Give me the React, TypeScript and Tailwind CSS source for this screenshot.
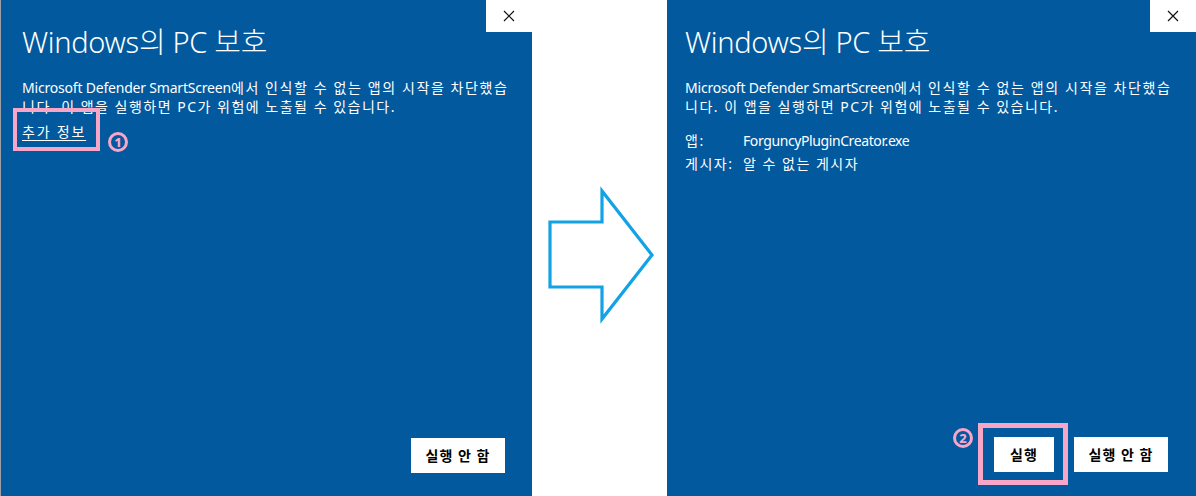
import React from "react";

const FONT = { fontFamily: '"Segoe UI", "Noto Sans", "Noto Sans CJK KR", sans-serif' };

function CloseBox() {
  return (
    <div className="absolute top-0 right-0 w-[46px] h-[32px] bg-white flex items-center justify-center">
      <svg width="12" height="12" viewBox="0 0 12 12">
        <path d="M1 1 L11 11 M11 1 L1 11" stroke="#111" strokeWidth="1.2" />
      </svg>
    </div>
  );
}

function Badge({ n }: { n: string }) {
  return (
    <div className="w-[20px] h-[20px] rounded-full border-[3px] border-[#f7a6c8] flex items-center justify-center text-[#f7a6c8] text-[13px] font-extrabold leading-none">
      {n}
    </div>
  );
}

function Btn({ label, w }: { label: string; w: string }) {
  return (
    <div className={`${w} h-[35px] bg-white flex items-center justify-center text-black text-[14px] font-bold tracking-[1px]`}>
      {label}
    </div>
  );
}

function Title() {
  return (
    <div className="text-white text-[29px] font-light leading-none tracking-[-0.3px]">Windows의 PC 보호</div>
  );
}

function Message() {
  return (
    <div className="text-white text-[14px] leading-[19px] whitespace-nowrap">
      <div>
        <span className="tracking-[-0.2px]">Microsoft Defender SmartScreen</span>
        <span className="tracking-[1.6px]">에서 인식할 수 없는 앱의 시작을 차단했습</span>
      </div>
      <div className="tracking-[1.5px]">니다. 이 앱을 실행하면 PC가 위험에 노출될 수 있습니다.</div>
    </div>
  );
}

function Arrow() {
  return (
    <svg width="135" height="496" viewBox="532 0 135 496">
      <polygon
        points="550,222 602,222 602,191 652,255 602,319 602,287 550,287"
        fill="none"
        stroke="#12a3e6"
        strokeWidth="3.2"
        strokeLinejoin="miter"
      />
    </svg>
  );
}

export default function App() {
  return (
    <div className="w-[1196px] h-[496px] bg-white flex" style={FONT}>
      {/* Left panel */}
      <div className="relative w-[532px] h-full bg-[#02599e] border-l border-[#9aa0a6] flex flex-col pl-[21px] pr-[27px] pt-[27px] pb-[23px]">
        <CloseBox />
        <Title />
        <div className="mt-[22px]">
          <Message />
        </div>
        <div className="mt-[3px] flex">
          <div className="relative">
            <span className="text-white text-[14px] leading-[19px] underline underline-offset-[3px] tracking-[1.8px]">추가 정보</span>
            <div className="absolute left-[-9px] top-[-11px] w-[87px] h-[43px] border-[4px] border-[#f7a6c8]" />
            <div className="absolute left-[86px] top-[13px]">
              <Badge n="1" />
            </div>
          </div>
        </div>
        <div className="flex-1" />
        <div className="flex justify-end">
          <Btn label="실행 안 함" w="w-[94px]" />
        </div>
      </div>

      {/* Arrow gap */}
      <div className="w-[135px] h-full">
        <Arrow />
      </div>

      {/* Right panel */}
      <div className="relative w-[529px] h-full bg-[#02599e] flex flex-col pl-[18px] pr-[28px] pt-[27px] pb-[24px]">
        <CloseBox />
        <Title />
        <div className="mt-[22px]">
          <Message />
        </div>
        <div className="mt-[13px] text-white text-[14px] leading-[23px] whitespace-nowrap">
          <div className="flex">
            <span className="w-[58px] tracking-[1.5px]">앱:</span>
            <span className="tracking-[-0.4px]">ForguncyPluginCreator.exe</span>
          </div>
          <div className="flex">
            <span className="w-[58px] tracking-[1.5px]">게시자:</span>
            <span className="tracking-[1.5px]">알 수 없는 게시자</span>
          </div>
        </div>
        <div className="flex-1" />
        <div className="flex justify-end items-center gap-[20px]">
          <div className="relative">
            <Btn label="실행" w="w-[60px]" />
            <div className="absolute left-[-16px] top-[-14px] w-[90px] h-[62px] border-[5px] border-[#f7a6c8]" />
            <div className="absolute left-[-41px] top-[-9px]">
              <Badge n="2" />
            </div>
          </div>
          <Btn label="실행 안 함" w="w-[94px]" />
        </div>
      </div>
    </div>
  );
}
